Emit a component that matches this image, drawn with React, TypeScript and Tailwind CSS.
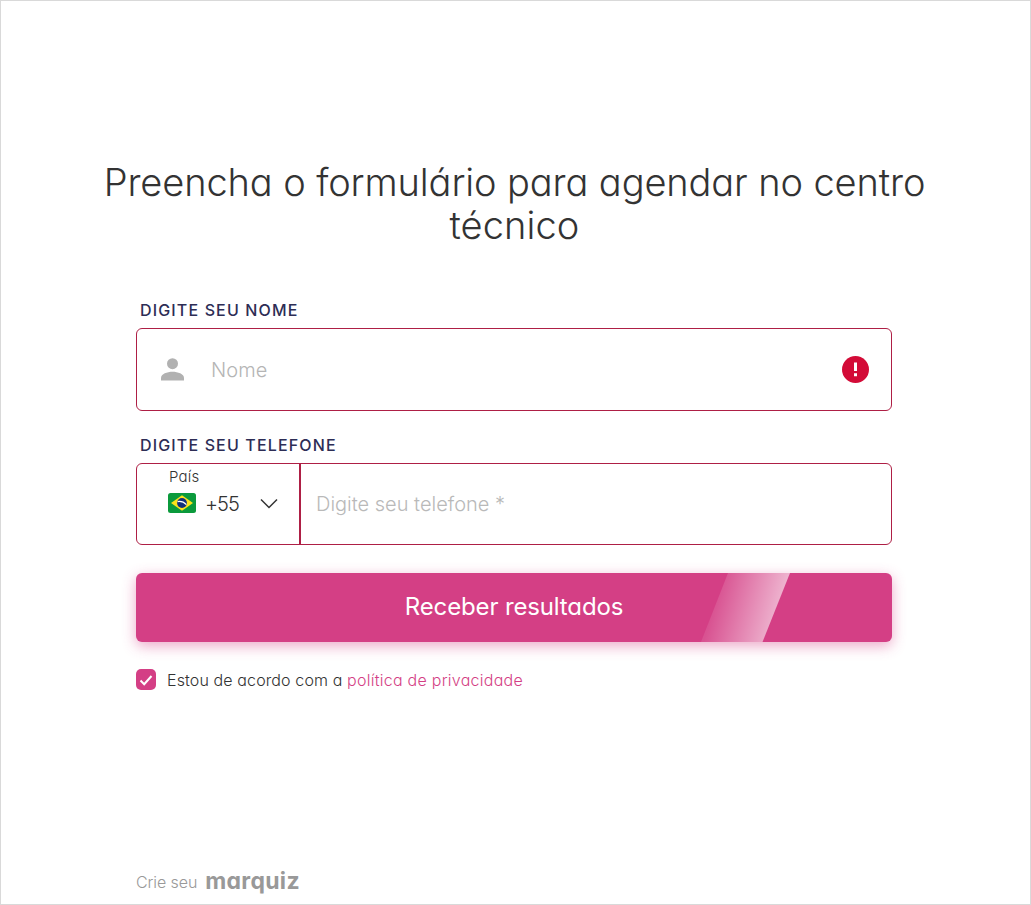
import React from "react";

function BrazilFlag() {
  return (
    <svg width="28" height="20" viewBox="0 0 28 20" aria-hidden="true">
      <rect width="28" height="20" rx="2.5" fill="#0b9a3c" />
      <path d="M14 2.2 25 10 14 17.8 3 10Z" fill="#fde21b" />
      <circle cx="14" cy="10" r="4.9" fill="#12307c" />
      <path
        d="M9.600 8.600c3-.6 6.400.5 8.800 3"
        fill="none"
        stroke="#fff"
        strokeWidth="1.300"
      />
    </svg>
  );
}

function PersonIcon() {
  return (
    <svg width="23" height="23" viewBox="0 0 23 23" fill="#b1b1b1" aria-hidden="true">
      <circle cx="11.500" cy="5.700" r="5.500" />
      <path d="M0 22.500v-2.700c0-3.700 6.200-6 11.500-6s11.500 2.300 11.500 6v2.700Z" />
    </svg>
  );
}

function ErrorIcon() {
  return (
    <svg width="27" height="27" viewBox="0 0 27 27" aria-hidden="true">
      <circle cx="13.500" cy="13.500" r="13.500" fill="#d30b37" />
      <path d="M12 6.500h3v8.500h-3ZM12 17.300h3v3h-3Z" fill="#fff" />
    </svg>
  );
}

function FieldLabel({ children }: { children: React.ReactNode }) {
  return (
    <span className="block h-[19px] pl-1 text-base leading-[19px] font-medium tracking-[1.150px] text-[#2d2d55]">
      {children}
    </span>
  );
}

export default function App() {
  return (
    <main className="flex h-[905px] w-full flex-col border border-[#d9d9d9] bg-white pt-[160px] font-['Inter',sans-serif] text-[#333] [font-feature-settings:'cv11']">
      <h1 className="pr-0.5 text-center text-[38px] leading-[43px] font-light whitespace-nowrap">
        <span className="tracking-[-0.110px]">
          Preencha o formulário para agendar no centro
        </span>
        <br />
        <span className="tracking-[0.100px]">técnico</span>
      </h1>

      <form className="mt-[54px] ml-[135px] w-[756px]">
        <FieldLabel>DIGITE SEU NOME</FieldLabel>
        <div className="mt-2 flex h-[83px] items-center rounded-md border border-[#ae1f45] pr-[22px] pl-6">
          <PersonIcon />
          <span className="ml-[27px] flex-1 text-xl font-light tracking-[0.100px] text-[#b5b5b5]">
            Nome
          </span>
          <ErrorIcon />
        </div>

        <div className="mt-[25px]">
          <FieldLabel>DIGITE SEU TELEFONE</FieldLabel>
        </div>
        <div className="mt-2 flex h-[82px] rounded-md border border-[#ae1f45]">
          <div className="w-[164px] border-r-2 border-[#ae1f45] pl-[31px]">
            <p className="mt-1 ml-px h-[18px] text-[15px] leading-[18px] font-light tracking-[0.200px]">
              País
            </p>
            <div className="mt-[5px] flex h-6 items-center">
              <BrazilFlag />
              <span className="mt-0.5 ml-[9px] w-[55px] text-xl font-light tracking-[-1px]">
                +55
              </span>
              <svg width="18" height="11" viewBox="0 0 18 11" fill="none" aria-hidden="true">
                <path d="m1 1.500 8 8 8-8" stroke="#333" strokeWidth="1.500" />
              </svg>
            </div>
          </div>
          <span className="flex items-center pl-[15px] text-xl font-light text-[#b9b9b9]">
            Digite seu telefone *
          </span>
        </div>

        <button
          type="button"
          className="relative mt-7 block h-[69px] w-full rounded-md bg-[#d43f85] pb-0.5 text-2xl tracking-[-0.140px] text-white shadow-[0_4px_14px_rgba(212,63,133,0.450)]"
        >
          <svg
            className="absolute top-0 left-[565px]"
            width="89"
            height="69"
            viewBox="0 0 89 69"
            aria-hidden="true"
          >
            <defs>
              <linearGradient id="shine" gradientUnits="userSpaceOnUse" x1="14" y1="28" x2="75" y2="45">
                <stop offset="0" stopColor="#fff" stopOpacity="0.100" />
                <stop offset="1" stopColor="#fff" stopOpacity="0.600" />
              </linearGradient>
            </defs>
            <path d="M27 0h62L61.500 69H0Z" fill="url(#shine)" />
          </svg>
          <span className="relative">Receber resultados</span>
        </button>

        <div className="mt-[27px] flex h-[21px] items-center">
          <span className="flex h-[21px] w-5 items-center justify-center rounded-[5px] bg-[#d43f85]">
            <svg width="14" height="12" viewBox="0 0 14 12" fill="none" aria-hidden="true">
              <path d="m1.500 6.500 3.700 3.700L12.500 2" stroke="#fff" strokeWidth="2" />
            </svg>
          </span>
          <p className="ml-[11px] text-base font-light tracking-[0.120px]">
            Estou de acordo com a{" "}
            <a className="tracking-[0.260px] text-[#d43f85]">política de privacidade</a>
          </p>
        </div>
      </form>

      <footer className="mt-[178px] ml-[135px] flex h-7 items-center text-[#999]">
        <span className="text-base font-light tracking-[-0.100px]">Crie seu</span>
        <span className="mb-0.5 ml-2 text-[23px] font-bold tracking-[0.300px]">
          marquiz
        </span>
      </footer>
    </main>
  );
}
